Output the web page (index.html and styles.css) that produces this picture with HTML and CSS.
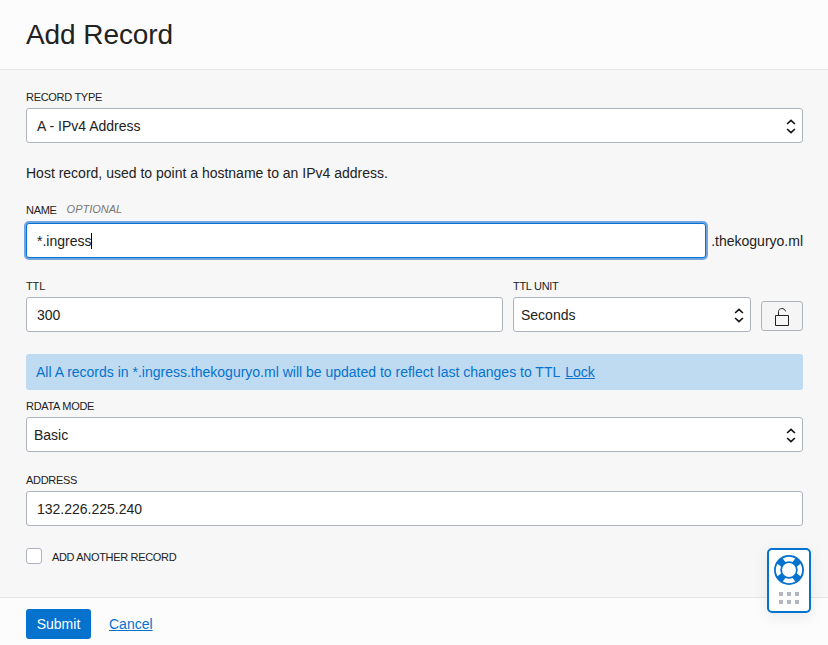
FILE: index.html
```html
<!DOCTYPE html>
<html lang="en">
<head>
<meta charset="utf-8">
<title>Add Record</title>
<link rel="stylesheet" href="styles.css">
</head>
<body>
<div class="panel">
  <header class="header"><h1 class="title">Add Record</h1></header>
  <main class="content">
    <div class="field">
      <div class="label"><span>RECORD TYPE</span></div>
      <div class="control"><span>A - IPv4 Address</span>
        <svg class="arrows" width="10" height="17" viewBox="0 0 10 17"><path d="M1.1 7 5 3.3 8.9 7M1.1 12 5 15.7 8.9 12"/></svg>
      </div>
    </div>
    <p class="hint">Host record, used to point a hostname to an IPv4 address.</p>
    <div class="field name-field">
      <div class="label"><span>NAME</span><em class="optional">OPTIONAL</em></div>
      <div class="name-row">
        <div class="control focused"><span>*.ingress</span><i class="caret"></i></div>
        <span class="suffix">.thekoguryo.ml</span>
      </div>
    </div>
    <div class="ttl-row">
      <div class="field ttl">
        <div class="label">TTL</div>
        <div class="control">300</div>
      </div>
      <div class="field unit">
        <div class="label"><span>TTL UNIT</span></div>
        <div class="control select"><span>Seconds</span>
          <svg class="arrows" width="10" height="17" viewBox="0 0 10 17"><path d="M1.1 7 5 3.3 8.9 7M1.1 12 5 15.7 8.9 12"/></svg>
        </div>
      </div>
      <button class="lock" aria-label="Lock">
        <svg width="16" height="20" viewBox="0 0 16 20"><path d="M1.5 9.5h13v10h-13z"/><path d="M4.5 9V5.6C4.5 1.6 10.8 1.4 11.5 5.4"/></svg>
      </button>
    </div>
    <div class="alert"><span>All A records in *.ingress.thekoguryo.ml will be updated to reflect last changes to TTL</span><a class="link">Lock</a></div>
    <div class="field mode">
      <div class="label"><span>RDATA MODE</span></div>
      <div class="control select"><span>Basic</span>
        <svg class="arrows" width="10" height="17" viewBox="0 0 10 17"><path d="M1.1 7 5 3.3 8.9 7M1.1 12 5 15.7 8.9 12"/></svg>
      </div>
    </div>
    <div class="field address">
      <div class="label"><span>ADDRESS</span></div>
      <div class="control">132.226.225.240</div>
    </div>
    <div class="check"><span class="box"></span><span class="check-label">ADD ANOTHER RECORD</span></div>
  </main>
  <footer class="footer"><button class="submit">Submit</button><a class="link cancel">Cancel</a></footer>
  <aside class="help">
    <svg width="30" height="30" viewBox="0 0 30 30">
      <circle class="ring" cx="15" cy="15" r="11"/>
      <g class="gaps"><path id="gap" d="M8.7 3.5A13.1 13.1 0 0 1 21.3 3.5L18.6 7A8.8 8.8 0 0 0 11.4 7z"/><use href="#gap" transform="rotate(90 15 15)"/><use href="#gap" transform="rotate(180 15 15)"/><use href="#gap" transform="rotate(270 15 15)"/></g>
    </svg>
    <div class="dots"><i></i><i></i><i></i><i></i><i></i><i></i></div>
  </aside>
</div>
</body>
</html>
```
FILE: styles.css
```css
* { box-sizing: border-box; }
body {
  margin: 0;
  font: 14px/20px "Liberation Sans", Arial, sans-serif;
  color: #222;
  background: #f7f7f7;
}
.panel {
  position: relative;
  height: 645px;
  display: flex;
  flex-direction: column;
  overflow: hidden;
}
.header {
  height: 70px;
  padding: 19px 26px 0;
  background: #fcfcfc;
  border-bottom: 1px solid #e4e5e6;
}
.title { margin: 0; font-size: 28px; line-height: 32px; font-weight: 400; letter-spacing: -.08px; }
.content { flex: 1; padding: 20px 25px 0 26px; }
.label { display: flex; height: 14px; margin-bottom: 4px; font-size: 11px; line-height: 14px; letter-spacing: -.3px; }
.control {
  display: flex;
  align-items: center;
  justify-content: space-between;
  height: 35px;
  padding: 0 6px 0 10px;
  background: #fff;
  border: 1px solid #aeb4be;
  border-radius: 3px;
}
.select { padding-left: 7px; }
.arrows { fill: none; stroke: #161616; stroke-width: 1.7; }
.hint { margin: 20px 0; }
.name-field .label { margin-bottom: 6px; }
.optional { margin: -1px 0 0 10px; color: #777; letter-spacing: 0; }
.name-row { display: flex; align-items: center; justify-content: space-between; }
.focused {
  width: 680px;
  justify-content: flex-start;
  border-color: #0572ce;
  box-shadow: 0 0 0 2px #71a5e2;
}
.caret { width: 1px; height: 16px; background: #000; }
.ttl-row { display: flex; gap: 10px; margin-top: 21px; }
.ttl { width: 477px; }
.ttl .label { letter-spacing: -.1px; }
.unit { width: 238px; }
.lock {
  display: flex;
  align-items: center;
  justify-content: center;
  width: 42px;
  height: 30px;
  margin-top: 22px;
  padding: 0;
  background: #f5f5f5;
  border: 1px solid #aeb4be;
  border-radius: 3px;
}
.lock svg { fill: none; stroke: #222; stroke-width: 1; }
.alert {
  display: flex;
  align-items: center;
  gap: 5px;
  height: 36px;
  margin-top: 22px;
  padding: 0 10px;
  background: #bfdbf1;
  border-radius: 3px;
  color: #0572ce;
}
.link { color: #0572ce; text-decoration: underline; }
.mode { margin-top: 9px; }
.address { margin-top: 21px; }
.check { display: flex; align-items: center; gap: 10px; height: 16px; margin-top: 22px; font-size: 11px; }
.check-label { padding-top: 2px; letter-spacing: -.33px; }
.box { width: 16px; height: 16px; background: #fff; border: 1px solid #aeb4be; border-radius: 3px; }
.footer {
  display: flex;
  align-items: center;
  gap: 18px;
  height: 48px;
  padding: 5px 26px 0;
  background: #fcfcfc;
  border-top: 1px solid #e4e5e6;
}
.submit {
  width: 65px;
  height: 30px;
  padding: 0;
  border: 0;
  border-radius: 3px;
  background: #0572ce;
  color: #fff;
  font: inherit;
}
.help {
  position: absolute;
  left: 767px;
  top: 548px;
  display: flex;
  flex-direction: column;
  align-items: center;
  width: 44px;
  height: 65px;
  padding-top: 5px;
  background: #fff;
  border: 2px solid #0572ce;
  border-radius: 5px;
  box-shadow: 0 4px 16px rgba(0, 0, 0, .08);
}
.ring { fill: none; stroke: #0572ce; stroke-width: 8; }
.gaps { fill: #fff; }
.dots { display: grid; grid-template-columns: repeat(3, 4px); gap: 4px; margin-top: 7px; }
.dots i { height: 4px; background: #b3b6c0; }
```
